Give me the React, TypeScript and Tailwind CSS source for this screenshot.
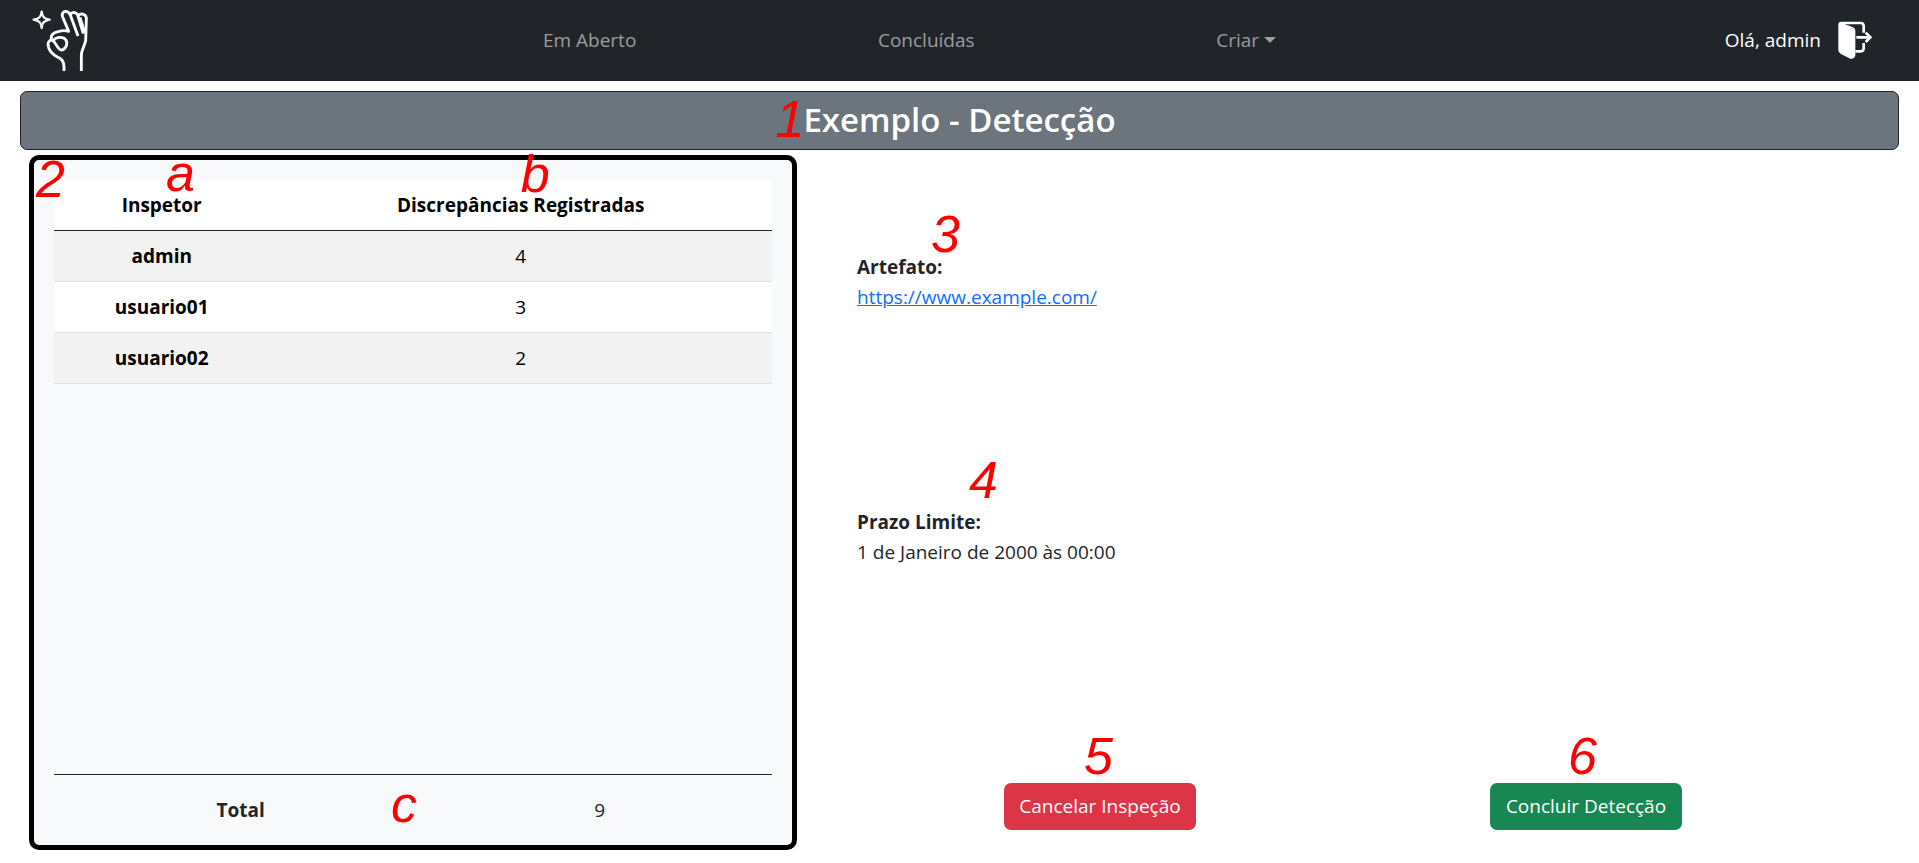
import React from "react";

const rows = [
  { inspector: "admin", count: 4 },
  { inspector: "usuario01", count: 3 },
  { inspector: "usuario02", count: 2 },
];

function Mark({ className, children }: { className: string; children: string }) {
  return (
    <span
      className={`pointer-events-none absolute z-10 font-['Liberation_Sans'] text-[52px] leading-none font-normal text-[#ff0000] italic ${className}`}
    >
      {children}
    </span>
  );
}

function Logo() {
  return (
    <svg
      className="h-16 w-[60px]"
      viewBox="90 24 180 192"
      fill="none"
      stroke="#fff"
      strokeWidth="8.5"
      strokeLinejoin="round"
      aria-hidden="true"
    >
      <path
        strokeWidth="7"
        d="M125 35 C126 50 132 57 149 59 C132 62 126 68 125 84 C124 68 118 62 101 59 C118 57 124 50 125 35 Z"
      />
      <path d="M192 213 V200 C191 184 187 177 176 173 C158 164 145 149 144 133 C144 123 151 119 160 121 C166 113 180 110 191 114 C203 121 203 135 195 144 C190 150 183 151 178 147 C169 139 169 130 158 121" />
      <path d="M154 119 C151 104 161 97 177 94 C187 91 194 90 206 94 L188 51 C183 38 193 33 201 35 C208 37 211 44 213 50 L234 108" />
      <path d="M211 42 C220 34 229 38 233 45 L250 101" />
      <path d="M234 46 C246 38 261 43 259 60 L257 122 C253 140 244 151 244 166 V213" />
      <path strokeWidth="6" d="M241 52 L255 97" />
    </svg>
  );
}

function LogoutIcon() {
  return (
    <svg className="h-10 w-9" viewBox="412 58 108 120" fill="none" aria-hidden="true">
      <path
        fill="#fff"
        d="M416 70 Q417 63 425 63 L436 71 L460 80 Q467 83 467 91 V164 Q465 176 452 174 L424 160 Q416 156 416 149 Z"
      />
      <path
        stroke="#fff"
        strokeWidth="8"
        d="M424 67 H484 Q492 67 492 77 V96 M467 152 H483 Q492 152 492 142 V127"
      />
      <path stroke="#fff" strokeWidth="8" d="M470 110 H511 M498 96 L512 110 L498 124" />
    </svg>
  );
}

export default function App() {
  return (
    <div className="flex min-h-screen flex-col bg-white font-['Open_Sans','Noto_Sans',sans-serif] text-[19px] leading-[30px] text-[#212529]">
      <header className="flex h-[81px] items-center bg-[#212529] pb-[2px]">
        <a href="#" aria-label="Início" className="flex w-[22%] pl-[30px]">
          <Logo />
        </a>
        <nav className="flex flex-1 items-center justify-around pr-1 text-[#9b9d9e]">
          <a href="#abertas">Em Aberto</a>
          <a href="#concluidas">Concluídas</a>
          <button type="button" className="flex items-center gap-[5px]">
            Criar
            <svg className="h-[6px] w-3" viewBox="0 0 12 6" aria-hidden="true">
              <path d="M0 0H12L6 6Z" fill="currentColor" />
            </svg>
          </button>
        </nav>
        <div className="flex w-[27%] items-center justify-end gap-4 pr-[46px] text-white">
          <span>Olá, admin</span>
          <button type="button" aria-label="Sair">
            <LogoutIcon />
          </button>
        </div>
      </header>

      <h1 className="mx-5 mt-[10px] flex h-[59px] items-center justify-center rounded-[7px] border border-[#212529] bg-[#6c757d] pb-[2px] text-[33px] font-semibold text-white">
        <span className="relative">
          <Mark className="-top-[12px] -left-[28px]">1</Mark>
          Exemplo - Detecção
        </span>
      </h1>

      <main className="mt-[5px] mb-[13px] flex flex-1 pl-[29px]">
        <section className="relative flex w-[768px] max-w-[41%] flex-col rounded-[10px] border-[5px] border-black bg-[#f8f9fa] px-5 pt-5">
          <Mark className="-top-[7px] left-[2px]">2</Mark>
          <table className="w-full table-fixed border-separate border-spacing-0 text-center text-black">
            <thead>
              <tr className="h-[51px] bg-white">
                <th className="relative w-[30%] border-b border-[#212529] font-bold">
                  <Mark className="-top-[33px] left-[112px]">a</Mark>
                  Inspetor
                </th>
                <th className="relative border-b border-[#212529] font-bold">
                  <Mark className="-top-[32px] left-1/2">b</Mark>
                  Discrepâncias Registradas
                </th>
              </tr>
            </thead>
            <tbody>
              {rows.map((row) => (
                <tr key={row.inspector} className="h-[51px] odd:bg-[#f2f2f2] even:bg-white">
                  <th className="border-b border-[#dee2e6] font-bold">{row.inspector}</th>
                  <td className="border-b border-[#dee2e6]">{row.count}</td>
                </tr>
              ))}
            </tbody>
          </table>
          <div className="relative mt-auto flex h-[71px] items-center border-t border-[#212529] text-center">
            <strong className="w-[52%]">Total</strong>
            <Mark className="top-[3px] left-[337px]">c</Mark>
            <span className="flex-1">9</span>
          </div>
        </section>

        <section className="grid flex-1 grid-cols-2 grid-rows-[254px_255px_1fr] pr-[90px] pl-[60px]">
          <div className="relative col-span-2 flex flex-col justify-center">
            <Mark className="top-[53px] left-[74px]">3</Mark>
            <strong>Artefato:</strong>
            <a href="https://www.example.com/" className="self-start text-[#0d6efd] underline">
              https://www.example.com/
            </a>
          </div>
          <div className="relative col-span-2 flex flex-col justify-center">
            <Mark className="top-[45px] left-[112px]">4</Mark>
            <strong>Prazo Limite:</strong>
            <span>1 de Janeiro de 2000 às 00:00</span>
          </div>
          <div className="flex items-end justify-center pb-5">
            <button
              type="button"
              className="relative h-[47px] w-48 rounded-[7px] bg-[#dc3545] pb-[2px] whitespace-nowrap text-white"
            >
              <Mark className="-top-[53px] left-[80px]">5</Mark>
              Cancelar Inspeção
            </button>
          </div>
          <div className="flex items-end justify-center pb-5">
            <button
              type="button"
              className="relative h-[47px] w-48 rounded-[7px] bg-[#198754] pb-[2px] whitespace-nowrap text-white"
            >
              <Mark className="-top-[53px] left-[78px]">6</Mark>
              Concluir Detecção
            </button>
          </div>
        </section>
      </main>
    </div>
  );
}
